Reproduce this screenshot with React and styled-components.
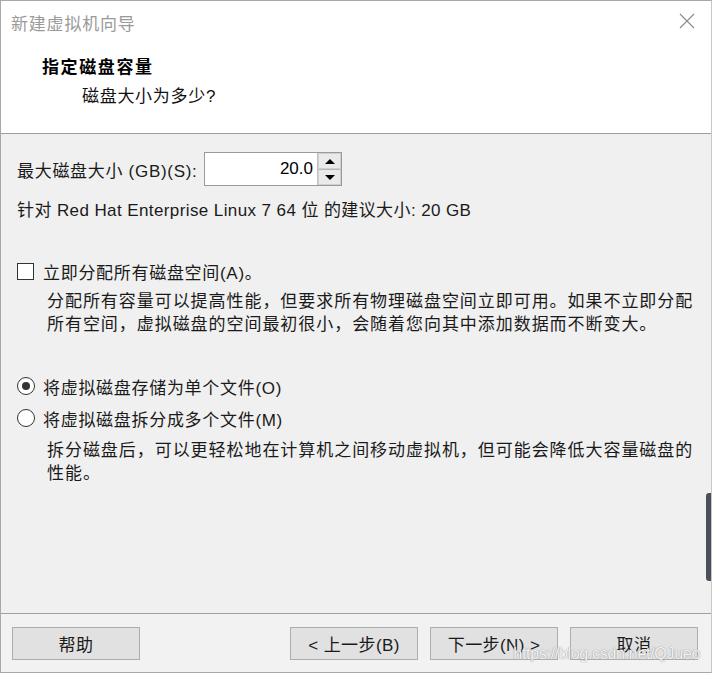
import React from 'react'
import styled, { createGlobalStyle } from 'styled-components'

const GlobalStyle = createGlobalStyle`
  html, body {
    margin: 0;
    padding: 0;
    background: #ffffff;
  }
  body {
    font-family: "Liberation Sans", "Noto Sans CJK SC", sans-serif;
    font-size: 17px;
    color: #1a1a1a;
  }
`

const Window = styled.div`
  position: relative;
  width: 712px;
  height: 673px;
  box-sizing: border-box;
  border: 1px solid #a8a8a8;
  border-right-color: #c8c8c8;
  display: flex;
  flex-direction: column;
  overflow: hidden;
  background: #f0f0f0;
`

const TitleBar = styled.div`
  height: 39px;
  background: #ffffff;
  display: flex;
  align-items: center;
  justify-content: space-between;
  padding: 0 16px 0 10px;
`

const TitleText = styled.span`
  color: #9a9a9a;
  font-size: 17px;
  letter-spacing: 0.8px;
  margin-top: 3px;
`

const Header = styled.div`
  height: 94px;
  box-sizing: border-box;
  background: #ffffff;
  border-bottom: 1px solid #a0a0a0;
  padding: 16px 0 0 41px;
`

const HeaderTitle = styled.div`
  font-weight: bold;
  line-height: 24px;
  letter-spacing: 1.6px;
  color: #000;
`

const HeaderSub = styled.div`
  line-height: 24px;
  margin-top: 5px;
  padding-left: 40px;
  letter-spacing: 0.7px;
  color: #111;
`

const Body = styled.div`
  flex: 1;
  padding: 18px 0 0 16px;
  display: flex;
  flex-direction: column;
`

const SizeRow = styled.div`
  display: flex;
  align-items: center;
  height: 34px;
`

const Label = styled.span`
  width: 187px;
  letter-spacing: 0.7px;
  white-space: nowrap;
`

const Spin = styled.div`
  display: flex;
  width: 138px;
  height: 34px;
  box-sizing: border-box;
  border: 1px solid #9a9a9a;
  background: #fff;
`

const SpinValue = styled.div`
  flex: 1;
  display: flex;
  align-items: center;
  justify-content: flex-end;
  padding-right: 4px;
  font-size: 17px;
  color: #000;
`

const SpinButtons = styled.div`
  width: 23px;
  display: flex;
  flex-direction: column;
  border-left: 1px solid #c0c0c0;
`

const SpinButton = styled.div`
  flex: 1;
  display: flex;
  align-items: center;
  justify-content: center;
  background: #eaeaea;
  border: 1px solid #d0d0d0;
  border-top-color: ${p => (p.$down ? '#b8b8b8' : '#d0d0d0')};
`

const Arrow = styled.div`
  width: 0;
  height: 0;
  border-left: 5px solid transparent;
  border-right: 5px solid transparent;
  ${p => (p.$down ? 'border-top: 5px solid #000;' : 'border-bottom: 5px solid #000;')}
`

const Line = styled.div`
  line-height: 24px;
  margin-top: ${p => p.$top || 0}px;
  white-space: nowrap;
  letter-spacing: 0.4px;
`

const OptionRow = styled.label`
  display: flex;
  align-items: center;
  height: 24px;
  margin-top: ${p => p.$top || 0}px;
  white-space: nowrap;
  letter-spacing: 0.7px;
`

const CheckBox = styled.span`
  width: 17px;
  height: 17px;
  box-sizing: border-box;
  border: 1px solid #333;
  background: #fff;
  margin-right: 9px;
`

const Radio = styled.span`
  width: 18px;
  height: 18px;
  box-sizing: border-box;
  border: 1px solid #333;
  border-radius: 50%;
  background: #fff;
  margin-right: 8px;
  display: flex;
  align-items: center;
  justify-content: center;

  &::after {
    content: '';
    width: 8px;
    height: 8px;
    border-radius: 50%;
    background: ${p => (p.$checked ? '#333' : 'transparent')};
  }
`

const Desc = styled.div`
  margin-top: ${p => p.$top || 0}px;
  padding-left: 30px;
  line-height: 22.5px;
  letter-spacing: 0.95px;
  white-space: nowrap;
  color: #1a1a1a;
`

const Footer = styled.div`
  border-top: 1px solid #a0a0a0;
  display: flex;
  align-items: flex-start;
  padding: 13px 13px 0 11px;
  box-sizing: border-box;
  height: 59px;
  gap: 12px;
  background: #f2f2f2;
`

const Button = styled.div`
  width: 128px;
  height: 33px;
  box-sizing: border-box;
  border: 1px solid #adadad;
  background: #e1e1e1;
  display: flex;
  align-items: center;
  justify-content: center;
  color: #1a1a1a;
  letter-spacing: 0.4px;
  white-space: nowrap;
  margin-left: ${p => (p.$push ? 'auto' : '0')};
`

const Watermark = styled.div`
  position: absolute;
  right: 11px;
  bottom: 9px;
  font-size: 16px;
  letter-spacing: -0.3px;
  color: rgba(255, 255, 255, 0.9);
  text-shadow: 0 0 1px #9a9a9a, 0 0 1px #9a9a9a;
  pointer-events: none;
`

const EdgeBar = styled.div`
  position: absolute;
  right: -1px;
  top: 492px;
  width: 6px;
  height: 88px;
  background: #4b4f59;
  border-radius: 3px 0 0 3px;
`

const CloseIcon = () => (
  <svg width="16" height="16" viewBox="0 0 16 16">
    <path d="M1 1 L15 15 M15 1 L1 15" stroke="#8a8a8a" strokeWidth="1.1" fill="none" />
  </svg>
)

export default function App() {
  return (
    <>
      <GlobalStyle />
      <Window>
        <TitleBar>
          <TitleText>新建虚拟机向导</TitleText>
          <CloseIcon />
        </TitleBar>
        <Header>
          <HeaderTitle>指定磁盘容量</HeaderTitle>
          <HeaderSub>磁盘大小为多少?</HeaderSub>
        </Header>
        <Body>
          <SizeRow>
            <Label>最大磁盘大小 (GB)(S):</Label>
            <Spin>
              <SpinValue>20.0</SpinValue>
              <SpinButtons>
                <SpinButton>
                  <Arrow />
                </SpinButton>
                <SpinButton $down>
                  <Arrow $down />
                </SpinButton>
              </SpinButtons>
            </Spin>
          </SizeRow>
          <Line $top={13}>针对 Red Hat Enterprise Linux 7 64 位 的建议大小: 20 GB</Line>

          <OptionRow $top={36}>
            <CheckBox />
            立即分配所有磁盘空间(A)。
          </OptionRow>
          <Desc $top={8}>
            分配所有容量可以提高性能，但要求所有物理磁盘空间立即可用。如果不立即分配
            <br />
            所有空间，虚拟磁盘的空间最初很小，会随着您向其中添加数据而不断变大。
          </Desc>

          <OptionRow $top={38}>
            <Radio $checked />
            将虚拟磁盘存储为单个文件(O)
          </OptionRow>
          <OptionRow $top={8}>
            <Radio />
            将虚拟磁盘拆分成多个文件(M)
          </OptionRow>
          <Desc $top={10}>
            拆分磁盘后，可以更轻松地在计算机之间移动虚拟机，但可能会降低大容量磁盘的
            <br />
            性能。
          </Desc>
        </Body>
        <Footer>
          <Button>帮助</Button>
          <Button $push>&lt; 上一步(B)</Button>
          <Button>下一步(N) &gt;</Button>
          <Button>取消</Button>
        </Footer>
        <Watermark>https://blog.csdn.net/QJueo</Watermark>
        <EdgeBar />
      </Window>
    </>
  )
}
